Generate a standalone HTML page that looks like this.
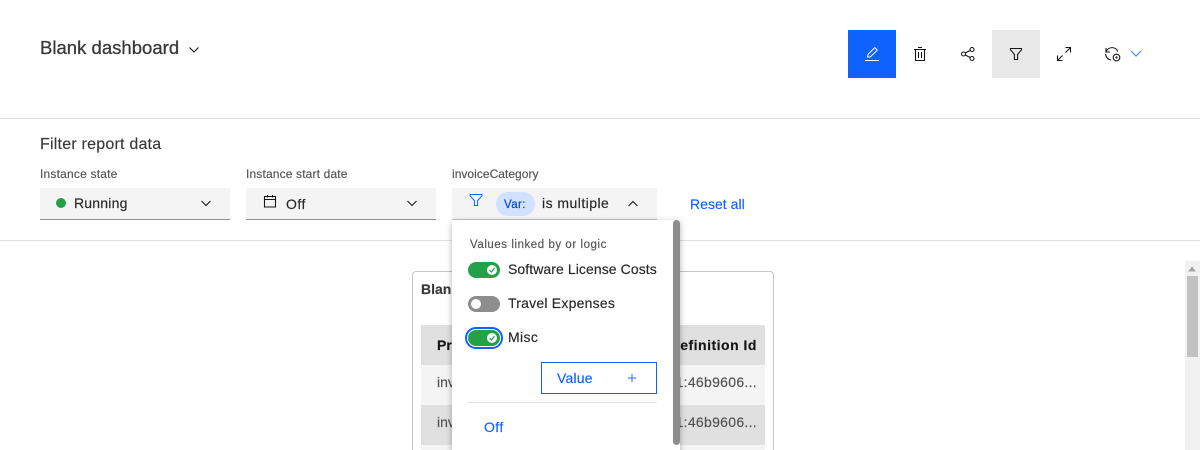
<!DOCTYPE html>
<html><head><meta charset="utf-8"><style>
html,body{margin:0;padding:0;background:#fff;width:1200px;height:450px;overflow:hidden}
body{position:relative;font-family:"Liberation Sans",sans-serif;color:#161616}
.a{position:absolute}
.t{position:absolute;white-space:nowrap;line-height:20px;-webkit-text-stroke:.15px currentColor}
svg{position:absolute;overflow:visible}
.i{fill:none;stroke:#161616;stroke-width:1.1}
.sw{position:absolute;left:468px;width:32px;height:16px;border-radius:8px;background:#24a148}
.k{position:absolute;left:19px;top:4px;width:10px;height:10px;border-radius:50%;background:#fff}
</style></head><body>
<div class="t" style="left:40px;top:38px;font-size:18.5px;letter-spacing:.02px;color:#393939;-webkit-text-stroke:.3px #393939">Blank dashboard</div>
<svg style="left:188px;top:45px" width="12" height="10"><path d="M1.5 2.5l4.5 4.5 4.5-4.5" class="i"/></svg>
<div class="a" style="left:848px;top:30px;width:48px;height:48px;background:#0f62fe"></div>
<svg style="left:864px;top:46px" width="16" height="16"><path d="M1 14.5h14M3.5 11l.6-2.7L10.8 1.6l2.5 2.5L6.2 11z" fill="none" stroke="#fff" stroke-width="1"/></svg>
<svg style="left:912px;top:46px" width="16" height="16"><path d="M2 3.5h12M6 1.5h4M3.5 3.5v11h9v-11M6.5 6v6M9.5 6v6" class="i"/></svg>
<svg style="left:960px;top:46px" width="16" height="16"><circle cx="3.5" cy="8" r="2" class="i"/><circle cx="12" cy="3.5" r="2" class="i"/><circle cx="12" cy="12.5" r="2" class="i"/><path d="M5.3 7l5-2.6M5.3 9l5 2.6" class="i"/></svg>
<div class="a" style="left:992px;top:30px;width:48px;height:48px;background:#e8e8e8"></div>
<svg style="left:1008px;top:46px" width="16" height="16"><path d="M2.5 2.5h11v1.3L9.6 8.3v5.2H6.4V8.3L2.5 3.8z" class="i"/></svg>
<svg style="left:1056px;top:46px" width="16" height="16"><path d="M1.5 14.5l5-5M9.5 6.5l5-5M1.5 9.5v5h5M9.5 1.5h5v5" class="i"/></svg>
<svg style="left:1104px;top:45px" width="18" height="18"><path d="M2 3v4h4M2.2 6.8A6.2 6.2 0 0 1 13.8 6.5M1.6 9a6.2 6.2 0 0 0 5.4 6" class="i"/><circle cx="12.5" cy="12.5" r="3.3" class="i"/><circle cx="12.5" cy="12.5" r="1.1" fill="#161616"/></svg>
<svg style="left:1130px;top:50px" width="12" height="8"><path d="M1 1l5 5 5-5" fill="none" stroke="#4589ff" stroke-width="1.2"/></svg>

<div class="a" style="left:0;top:118px;width:1200px;height:1px;background:#e0e0e0"></div>
<div class="t" style="left:40px;top:135px;font-size:16px;letter-spacing:.22px;color:#393939">Filter report data</div>
<div class="a" style="left:0;top:240px;width:1200px;height:1px;background:#e0e0e0"></div>

<div class="t" style="left:40px;top:164px;font-size:12px;letter-spacing:.2px;color:#525252">Instance state</div>
<div class="a" style="left:40px;top:188px;width:190px;height:31px;background:#f4f4f4;border-bottom:1px solid #8d8d8d"></div>
<div class="a" style="left:56px;top:198px;width:10px;height:10px;border-radius:50%;background:#24a148"></div>
<div class="t" style="left:74px;top:193px;font-size:14px;letter-spacing:.2px;color:#262626">Running</div>
<svg style="left:200px;top:200px" width="12" height="8"><path d="M1.5 1l4.5 4.5L10.5 1" class="i"/></svg>

<div class="t" style="left:246px;top:164px;font-size:12px;letter-spacing:.15px;color:#525252">Instance start date</div>
<div class="a" style="left:246px;top:188px;width:190px;height:31px;background:#f4f4f4;border-bottom:1px solid #8d8d8d"></div>
<svg style="left:263px;top:194px" width="14" height="14"><path d="M1.5 2.5h11v10.5h-11zM1.5 5.5h11M4.5 1v2.5M9.5 1v2.5" class="i"/></svg>
<div class="t" style="left:286px;top:194px;font-size:14px;letter-spacing:.5px;color:#262626">Off</div>
<svg style="left:406px;top:200px" width="12" height="8"><path d="M1.5 1l4.5 4.5L10.5 1" class="i"/></svg>

<div class="t" style="left:452px;top:164px;font-size:12px;letter-spacing:.03px;color:#525252">invoiceCategory</div>
<div class="a" style="left:452px;top:188px;width:205px;height:31px;background:#f4f4f4;border-bottom:1px solid #c6c6c6"></div>
<svg style="left:469px;top:193px" width="14" height="14"><path d="M1 1.5h12v1.3L8.6 7.5v5H5.4v-5L1 2.8z" fill="none" stroke="#0f62fe" stroke-width="1"/></svg>
<div class="a" style="left:496px;top:192px;width:39px;height:24px;border-radius:12px;background:#d0e2ff"></div>
<div class="t" style="left:504px;top:195px;font-size:11.5px;letter-spacing:.4px;color:#0043ce">Var:</div>
<div class="t" style="left:542px;top:193px;font-size:14px;letter-spacing:.46px;color:#262626">is multiple</div>
<svg style="left:627px;top:200px" width="12" height="8"><path d="M1.5 6l4.5-4.5L10.5 6" class="i"/></svg>
<div class="t" style="left:690px;top:194px;font-size:14px;letter-spacing:.03px;color:#0f62fe">Reset all</div>

<div class="a" style="left:412px;top:271px;width:360px;height:190px;border:1px solid #c6c6c6;border-radius:4px"></div>
<div class="t" style="left:421px;top:279px;font-size:14px;font-weight:bold;color:#393939">Blank</div>
<div class="a" style="left:421px;top:325px;width:344px;height:40px;background:#e0e0e0"></div>
<div class="a" style="left:421px;top:365px;width:344px;height:40px;background:#f4f4f4"></div>
<div class="a" style="left:421px;top:405px;width:344px;height:40px;background:#e0e0e0"></div>
<div class="a" style="left:421px;top:445px;width:344px;height:5px;background:#f4f4f4"></div>
<div class="t" style="left:437px;top:335px;font-size:14px;font-weight:bold;color:#161616">Pr</div>
<div class="t" style="left:437px;top:372px;font-size:14px;color:#525252">inv</div>
<div class="t" style="left:437px;top:412px;font-size:14px;color:#525252">inv</div>
<div class="a" style="left:680px;top:325px;width:77px;height:120px;overflow:hidden">
<div class="t" style="right:0;top:10px;font-size:14px;font-weight:bold;letter-spacing:.5px;color:#161616">Definition Id</div>
<div class="t" style="right:0;top:47px;font-size:14px;letter-spacing:.3px;color:#525252">1:46b9606...</div>
<div class="t" style="right:0;top:87px;font-size:14px;letter-spacing:.3px;color:#525252">1:46b9606...</div>
</div>

<div class="a" style="left:452px;top:220px;width:228px;height:240px;background:#fff;box-shadow:0 2px 6px rgba(0,0,0,.3)"></div>
<div class="a" style="left:673px;top:220px;width:7px;height:225px;border-radius:4px;background:#8d8d8d"></div>
<div class="t" style="left:470px;top:235px;font-size:11.5px;letter-spacing:.55px;color:#525252">Values linked by or logic</div>
<div class="sw" style="top:262px"><div class="k" style="left:19px;top:3px"></div><svg style="left:21px;top:5px" width="6" height="6"><path d="M.5 3l2 2L5.5 1" fill="none" stroke="#24a148" stroke-width="1.2"/></svg></div>
<div class="t" style="left:508px;top:259px;font-size:14px;letter-spacing:.08px;color:#262626">Software License Costs</div>
<div class="sw" style="top:296px;background:#8d8d8d"><div class="k" style="left:3px;top:3px"></div></div>
<div class="t" style="left:508px;top:293px;font-size:14px;letter-spacing:.22px;color:#262626">Travel Expenses</div>
<div class="a" style="left:465px;top:327px;border:2px solid #0f62fe;border-radius:12px;box-sizing:content-box;width:34px;height:18px;background:#fff"></div>
<div class="sw" style="top:330px"><div class="k" style="top:3px"></div><svg style="left:21px;top:5px" width="6" height="6"><path d="M.5 3l2 2L5.5 1" fill="none" stroke="#24a148" stroke-width="1.2"/></svg></div>
<div class="t" style="left:508px;top:327px;font-size:14px;letter-spacing:.35px;color:#262626">Misc</div>
<div class="a" style="left:541px;top:362px;width:114px;height:30px;border:1px solid #0f62fe"></div>
<div class="t" style="left:557px;top:368px;font-size:14px;letter-spacing:.2px;color:#0f62fe">Value</div>
<svg style="left:627px;top:373px" width="10" height="10"><path d="M5 1v8M1 5h8" fill="none" stroke="#4589ff" stroke-width="1.2"/></svg>
<div class="a" style="left:468px;top:402px;width:189px;height:1px;background:#e0e0e0"></div>
<div class="t" style="left:484px;top:417px;font-size:14px;letter-spacing:.4px;color:#0f62fe">Off</div>

<div class="a" style="left:1185px;top:261px;width:15px;height:189px;background:#f1f1f1"></div>
<svg style="left:1188px;top:266px" width="8" height="6"><path d="M4 0.5L8 5.5H0z" fill="#a3a3a3"/></svg>
<div class="a" style="left:1187px;top:276px;width:11px;height:81px;background:#c1c1c1"></div>
</body></html>
